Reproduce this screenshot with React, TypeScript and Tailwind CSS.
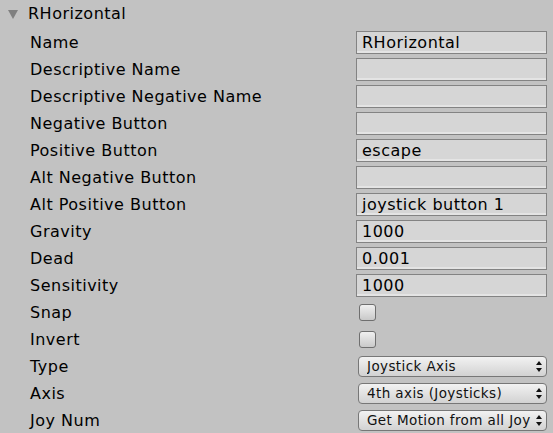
import React from "react";

type Row =
    | { label: string; kind: "text"; value: string }
    | { label: string; kind: "check" }
    | { label: string; kind: "select"; value: string };

const rows: Row[] = [
    { label: "Name", kind: "text", value: "RHorizontal" },
    { label: "Descriptive Name", kind: "text", value: "" },
    { label: "Descriptive Negative Name", kind: "text", value: "" },
    { label: "Negative Button", kind: "text", value: "" },
    { label: "Positive Button", kind: "text", value: "escape" },
    { label: "Alt Negative Button", kind: "text", value: "" },
    { label: "Alt Positive Button", kind: "text", value: "joystick button 1" },
    { label: "Gravity", kind: "text", value: "1000" },
    { label: "Dead", kind: "text", value: "0.001" },
    { label: "Sensitivity", kind: "text", value: "1000" },
    { label: "Snap", kind: "check" },
    { label: "Invert", kind: "check" },
    { label: "Type", kind: "select", value: "Joystick Axis" },
    { label: "Axis", kind: "select", value: "4th axis (Joysticks)" },
    { label: "Joy Num", kind: "select", value: "Get Motion from all Joy" },
];

function SelectArrows() {
    return (
        <svg width="6" height="11" viewBox="0 0 6 11" className="shrink-0">
            <path d="M3 0 L6 4 H0 Z" fill="#111" />
            <path d="M3 11 L6 7 H0 Z" fill="#111" />
        </svg>
    );
}

function Field({ row }: { row: Row }) {
    if (row.kind === "text") {
        return (
            <div className="h-[23px] w-[191px] border border-[#838383] bg-[#d6d6d6] shadow-[inset_0_-2px_0_#e4e4e4] flex items-center px-[5px] text-[16px] tracking-[0.5px] text-black leading-[20px] overflow-hidden whitespace-nowrap">
                {row.value}
            </div>
        );
    }
    if (row.kind === "check") {
        return (
            <div className="ml-[3px] h-[17px] w-[17px] rounded-[3px] border border-[#6f6f6f] bg-gradient-to-b from-[#f0f0f0] to-[#c9c9c9]" />
        );
    }
    return (
        <div className="ml-[2px] h-[21px] w-[189px] rounded-[4px] border border-[#777] bg-gradient-to-b from-[#f2f2f2] to-[#d2d2d2] flex items-center pl-[8px] pr-[4px] gap-[2px] text-[13.5px] tracking-[0.4px] text-[#111] leading-[19px]">
            <span className="flex-1 min-w-0 whitespace-nowrap [overflow-x:clip] overflow-y-visible">{row.value}</span>
            <SelectArrows />
        </div>
    );
}

export default function App() {
    return (
        <div
            className="w-[553px] h-[433px] overflow-hidden bg-[#c2c2c2] text-black"
            style={{ fontFamily: '"DejaVu Sans", Verdana, sans-serif' }}
        >
            {/* foldout header */}
            <div className="h-[29px] flex items-center pl-[8px] pb-[1px]">
                <svg width="10" height="10" viewBox="0 0 10 10" className="mr-[10px]">
                    <path d="M0 1 H10 L5 10 Z" fill="#808080" />
                </svg>
                <span className="text-[16px] tracking-[0.5px] leading-none">RHorizontal</span>
            </div>

            {rows.map((row) => (
                <div key={row.label} className="h-[27px] flex items-center">
                    <div className="w-[356px] pl-[30px] text-[16px] tracking-[0.5px] leading-none whitespace-nowrap">{row.label}</div>
                    <Field row={row} />
                </div>
            ))}
        </div>
    );
}
